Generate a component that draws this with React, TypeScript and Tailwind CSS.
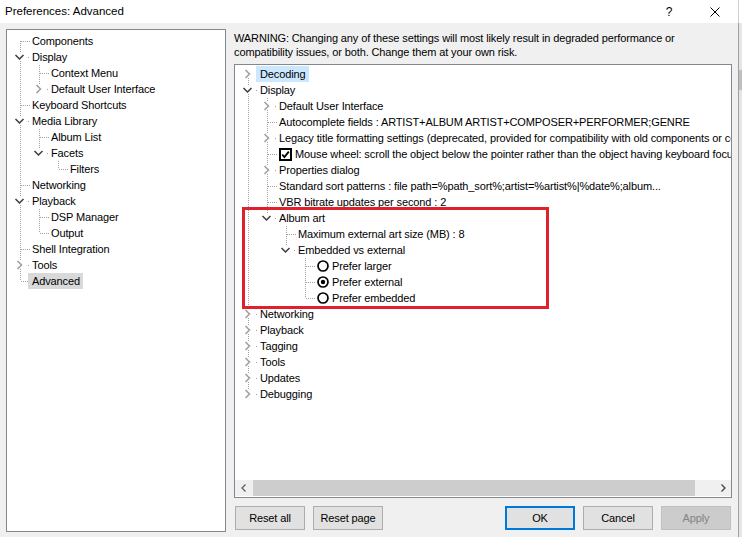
import React from "react";

type TNode = {
  label: string;
  children?: TNode[];
  expanded?: boolean;
  sel?: "gray" | "blue";
  kind?: "check" | "radio" | "radioOn";
};

type Row = {
  node: TNode;
  depth: number;
  guides: boolean[];
  top: boolean;
  bottom: boolean;
};

function flatten(nodes: TNode[], depth: number, guides: boolean[], out: Row[]) {
  nodes.forEach((n, i) => {
    const hasNext = i < nodes.length - 1;
    const top = !(depth === 0 && i === 0);
    out.push({ node: n, depth, guides, top, bottom: hasNext });
    if (n.children && n.expanded) {
      flatten(n.children, depth + 1, [...guides, hasNext], out);
    }
  });
  return out;
}

const LINE = "#a0a0a0";

function GuideCell({ on }: { on: boolean }) {
  return (
    <svg width="19" height="16" className="block shrink-0" shapeRendering="crispEdges">
      {on && <line x1="9.5" y1="0" x2="9.5" y2="16" stroke={LINE} strokeDasharray="1 1" />}
    </svg>
  );
}

function OwnCell({ row }: { row: Row }) {
  const hasKids = !!row.node.children;
  return (
    <svg width="19" height="16" className="block shrink-0">
      <g shapeRendering="crispEdges">
        {hasKids ? (
          <>
            {row.top && <line x1="9.5" y1="0" x2="9.5" y2="4" stroke={LINE} strokeDasharray="1 1" />}
            {row.bottom && <line x1="9.5" y1="12" x2="9.5" y2="16" stroke={LINE} strokeDasharray="1 1" />}
            <rect x="17" y="8" width="1" height="1" fill={LINE} />
          </>
        ) : (
          <>
            <line x1="9.5" y1={row.top ? 0 : 8} x2="9.5" y2={row.bottom ? 16 : 8} stroke={LINE} strokeDasharray="1 1" />
            <line x1="10" y1="8.5" x2="19" y2="8.5" stroke={LINE} strokeDasharray="1 1" />
          </>
        )}
      </g>
      {hasKids &&
        (row.node.expanded ? (
          <polyline points="4.5,6 8.5,10 12.5,6" fill="none" stroke="#3c3c3c" strokeWidth="1.5" />
        ) : (
          <polyline points="6.5,4 10.5,8 6.5,12" fill="none" stroke="#a0a0a0" strokeWidth="1.6" />
        ))}
    </svg>
  );
}

function CheckBox() {
  return (
    <svg width="13" height="13" className="block shrink-0">
      <rect x="1" y="1" width="11" height="11" fill="#fff" stroke="#000" strokeWidth="2" />
      <polyline points="3.2,6.5 5.4,9 9.8,3.6" fill="none" stroke="#000" strokeWidth="1.8" />
    </svg>
  );
}

function Radio({ on }: { on: boolean }) {
  return (
    <svg width="12" height="12" className="block shrink-0">
      <circle cx="6" cy="6" r="5" fill="#fff" stroke="#000" strokeWidth="1.7" />
      {on && <circle cx="6" cy="6" r="2.2" fill="#000" />}
    </svg>
  );
}

function Tree({ nodes }: { nodes: TNode[] }) {
  const rows = flatten(nodes, 0, [], []);
  return (
    <div className="flex flex-col">
      {rows.map((r, i) => (
        <div key={i} className="flex h-[16px] items-center whitespace-nowrap">
          {r.guides.map((g, j) => (
            <GuideCell key={j} on={g} />
          ))}
          <OwnCell row={r} />
          <span
            className={
              "-ml-[2px] flex h-[16px] items-center gap-[3px] pl-[4px] pr-[3px] leading-[16px] " +
              (r.node.sel === "gray" ? "bg-[#d9d9d9]" : r.node.sel === "blue" ? "bg-[#cce8ff]" : "")
            }
          >
            {r.node.kind === "check" && <CheckBox />}
            {r.node.kind === "radio" && <Radio on={false} />}
            {r.node.kind === "radioOn" && <Radio on={true} />}
            <span>{r.node.label}</span>
          </span>
        </div>
      ))}
    </div>
  );
}

const leftTree: TNode[] = [
  { label: "Components" },
  {
    label: "Display",
    expanded: true,
    children: [{ label: "Context Menu" }, { label: "Default User Interface", children: [] }],
  },
  { label: "Keyboard Shortcuts" },
  {
    label: "Media Library",
    expanded: true,
    children: [
      { label: "Album List" },
      { label: "Facets", expanded: true, children: [{ label: "Filters" }] },
    ],
  },
  { label: "Networking" },
  {
    label: "Playback",
    expanded: true,
    children: [{ label: "DSP Manager" }, { label: "Output" }],
  },
  { label: "Shell Integration" },
  { label: "Tools", children: [] },
  { label: "Advanced", sel: "gray" },
];

const rightTree: TNode[] = [
  { label: "Decoding", children: [], sel: "blue" },
  {
    label: "Display",
    expanded: true,
    children: [
      { label: "Default User Interface", children: [] },
      { label: "Autocomplete fields : ARTIST+ALBUM ARTIST+COMPOSER+PERFORMER;GENRE" },
      {
        label:
          "Legacy title formatting settings (deprecated, provided for compatibility with old components or configurations)",
        children: [],
      },
      {
        label: "Mouse wheel: scroll the object below the pointer rather than the object having keyboard focus",
        kind: "check",
      },
      { label: "Properties dialog", children: [] },
      { label: "Standard sort patterns : file path=%path_sort%;artist=%artist%|%date%;album..." },
      { label: "VBR bitrate updates per second : 2" },
      {
        label: "Album art",
        expanded: true,
        children: [
          { label: "Maximum external art size (MB) : 8" },
          {
            label: "Embedded vs external",
            expanded: true,
            children: [
              { label: "Prefer larger", kind: "radio" },
              { label: "Prefer external", kind: "radioOn" },
              { label: "Prefer embedded", kind: "radio" },
            ],
          },
        ],
      },
    ],
  },
  { label: "Networking", children: [] },
  { label: "Playback", children: [] },
  { label: "Tagging", children: [] },
  { label: "Tools", children: [] },
  { label: "Updates", children: [] },
  { label: "Debugging", children: [] },
];

function Btn({ children, kind }: { children: React.ReactNode; kind?: "default" | "disabled" }) {
  const cls =
    kind === "default"
      ? "border-2 border-[#0078d7] bg-[#e1e1e1] text-black"
      : kind === "disabled"
      ? "border border-[#bfbfbf] bg-[#cccccc] text-[#838383]"
      : "border border-[#adadad] bg-[#e1e1e1] text-black";
  return (
    <div className={"flex h-[24px] w-[70px] items-center justify-center leading-none " + cls}>{children}</div>
  );
}

export default function App() {
  return (
    <div className="relative flex h-[537px] w-[742px] overflow-hidden bg-[#f0f0f0] font-['Liberation_Sans',Arial,sans-serif] text-[11px] tracking-[-0.12px] text-black">
      <div className="flex w-[738px] flex-col">
        <div className="flex h-[23px] items-center bg-white">
          <span className="pl-[5px] text-[11.5px] tracking-normal">Preferences: Advanced</span>
          <div className="ml-auto flex h-full">
            <div className="flex w-[46px] items-center justify-center text-[12px]">?</div>
            <div className="flex w-[46px] items-center justify-center">
              <svg width="10" height="10" shapeRendering="geometricPrecision">
                <line x1="0.5" y1="0.5" x2="9.5" y2="9.5" stroke="#000" strokeWidth="1" />
                <line x1="9.5" y1="0.5" x2="0.5" y2="9.5" stroke="#000" strokeWidth="1" />
              </svg>
            </div>
          </div>
        </div>
        <div className="flex gap-[8px] pl-[6px] pt-[6px]">
          <div className="h-[503px] w-[220px] overflow-hidden border border-[#828790] bg-white pl-[4px] pt-[3px]">
            <Tree nodes={leftTree} />
          </div>
          <div className="flex w-[498px] flex-col">
            <div className="h-[35px] whitespace-nowrap pt-[2px] leading-[14px]">
              <div>WARNING: Changing any of these settings will most likely result in degraded performance or</div>
              <div>compatibility issues, or both. Change them at your own risk.</div>
            </div>
            <div className="flex h-[434px] flex-col border border-[#828790] bg-white">
              <div className="flex-1 overflow-hidden pl-[4px] pt-[1px]">
                <Tree nodes={rightTree} />
              </div>
              <div className="mb-[1px] flex h-[16px] bg-[#f0f0f0]">
                <div className="flex w-[17px] items-center justify-center">
                  <svg width="6" height="8">
                    <polyline points="4.5,0.5 1,4 4.5,7.5" fill="none" stroke="#606060" strokeWidth="1.3" />
                  </svg>
                </div>
                <div className="ml-[1px] w-[442px] bg-[#cdcdcd]" />
                <div className="flex-1" />
                <div className="flex w-[17px] items-center justify-center">
                  <svg width="6" height="8">
                    <polyline points="1.5,0.5 5,4 1.5,7.5" fill="none" stroke="#404040" strokeWidth="1.3" />
                  </svg>
                </div>
              </div>
            </div>
            <div className="mt-[8px] flex justify-between px-[1px]">
              <div className="flex gap-[8px]">
                <Btn>Reset all</Btn>
                <Btn>Reset page</Btn>
              </div>
              <div className="flex gap-[8px]">
                <Btn kind="default">OK</Btn>
                <Btn>Cancel</Btn>
                <Btn kind="disabled">Apply</Btn>
              </div>
            </div>
          </div>
        </div>
      </div>
      <div className="flex w-[4px] flex-col">
        <div className="h-[23px] border-l border-[#d0d0d0] bg-white" />
        <div className="flex-1 border-l border-[#a0a0a0] bg-[#e6e6e6] pt-[47px]">
          <div className="h-[20px] bg-[#c0c0c0]" />
        </div>
      </div>
      <div className="pointer-events-none absolute left-[242px] top-[207px] h-[102px] w-[307px] border-[3px] border-[#e0202a]" />
    </div>
  );
}
